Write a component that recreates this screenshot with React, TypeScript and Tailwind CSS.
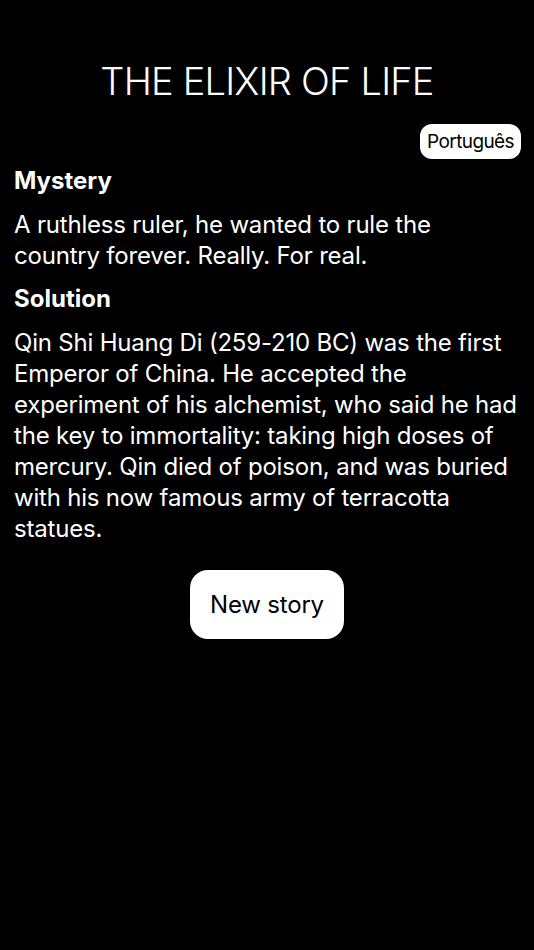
export default function App() {
  return (
    <div className="min-h-[950px] bg-black text-white" style={{ fontFamily: "Inter, 'Noto Sans', sans-serif" }}>
      <div className="flex flex-col px-[14px]">
        <h1 className="mt-[58px] text-center text-[38px] font-light leading-[46px] tracking-[-0.8px]">THE ELIXIR OF LIFE</h1>
        <div className="mt-[20px] flex justify-end">
          <button className="-mr-[1px] h-[35px] rounded-[12px] bg-white px-[7px] text-[19px] leading-none tracking-[-0.6px] text-black">Português</button>
        </div>
        <h2 className="mt-[7px] text-[24px] font-bold leading-[30px]">Mystery</h2>
        <p className="mt-[13px] text-[24px] leading-[31px] tracking-[-0.2px]">A ruthless ruler, he wanted to rule the country forever. Really. For real.</p>
        <h2 className="mt-[13px] text-[24px] font-bold leading-[30px]">Solution</h2>
        <p className="mt-[13px] text-[24px] leading-[31px] tracking-[-0.2px]">Qin Shi Huang Di (259-210 BC) was the first Emperor of China. He accepted the experiment of his alchemist, who said he had the key to immortality: taking high doses of mercury. Qin died of poison, and was buried with his now famous army of terracotta statues.</p>
        <div className="mt-[26px] flex justify-center">
          <button className="h-[69px] w-[154px] rounded-[18px] bg-white text-[24px] tracking-[-0.2px] text-black">New story</button>
        </div>
      </div>
    </div>
  );
}
